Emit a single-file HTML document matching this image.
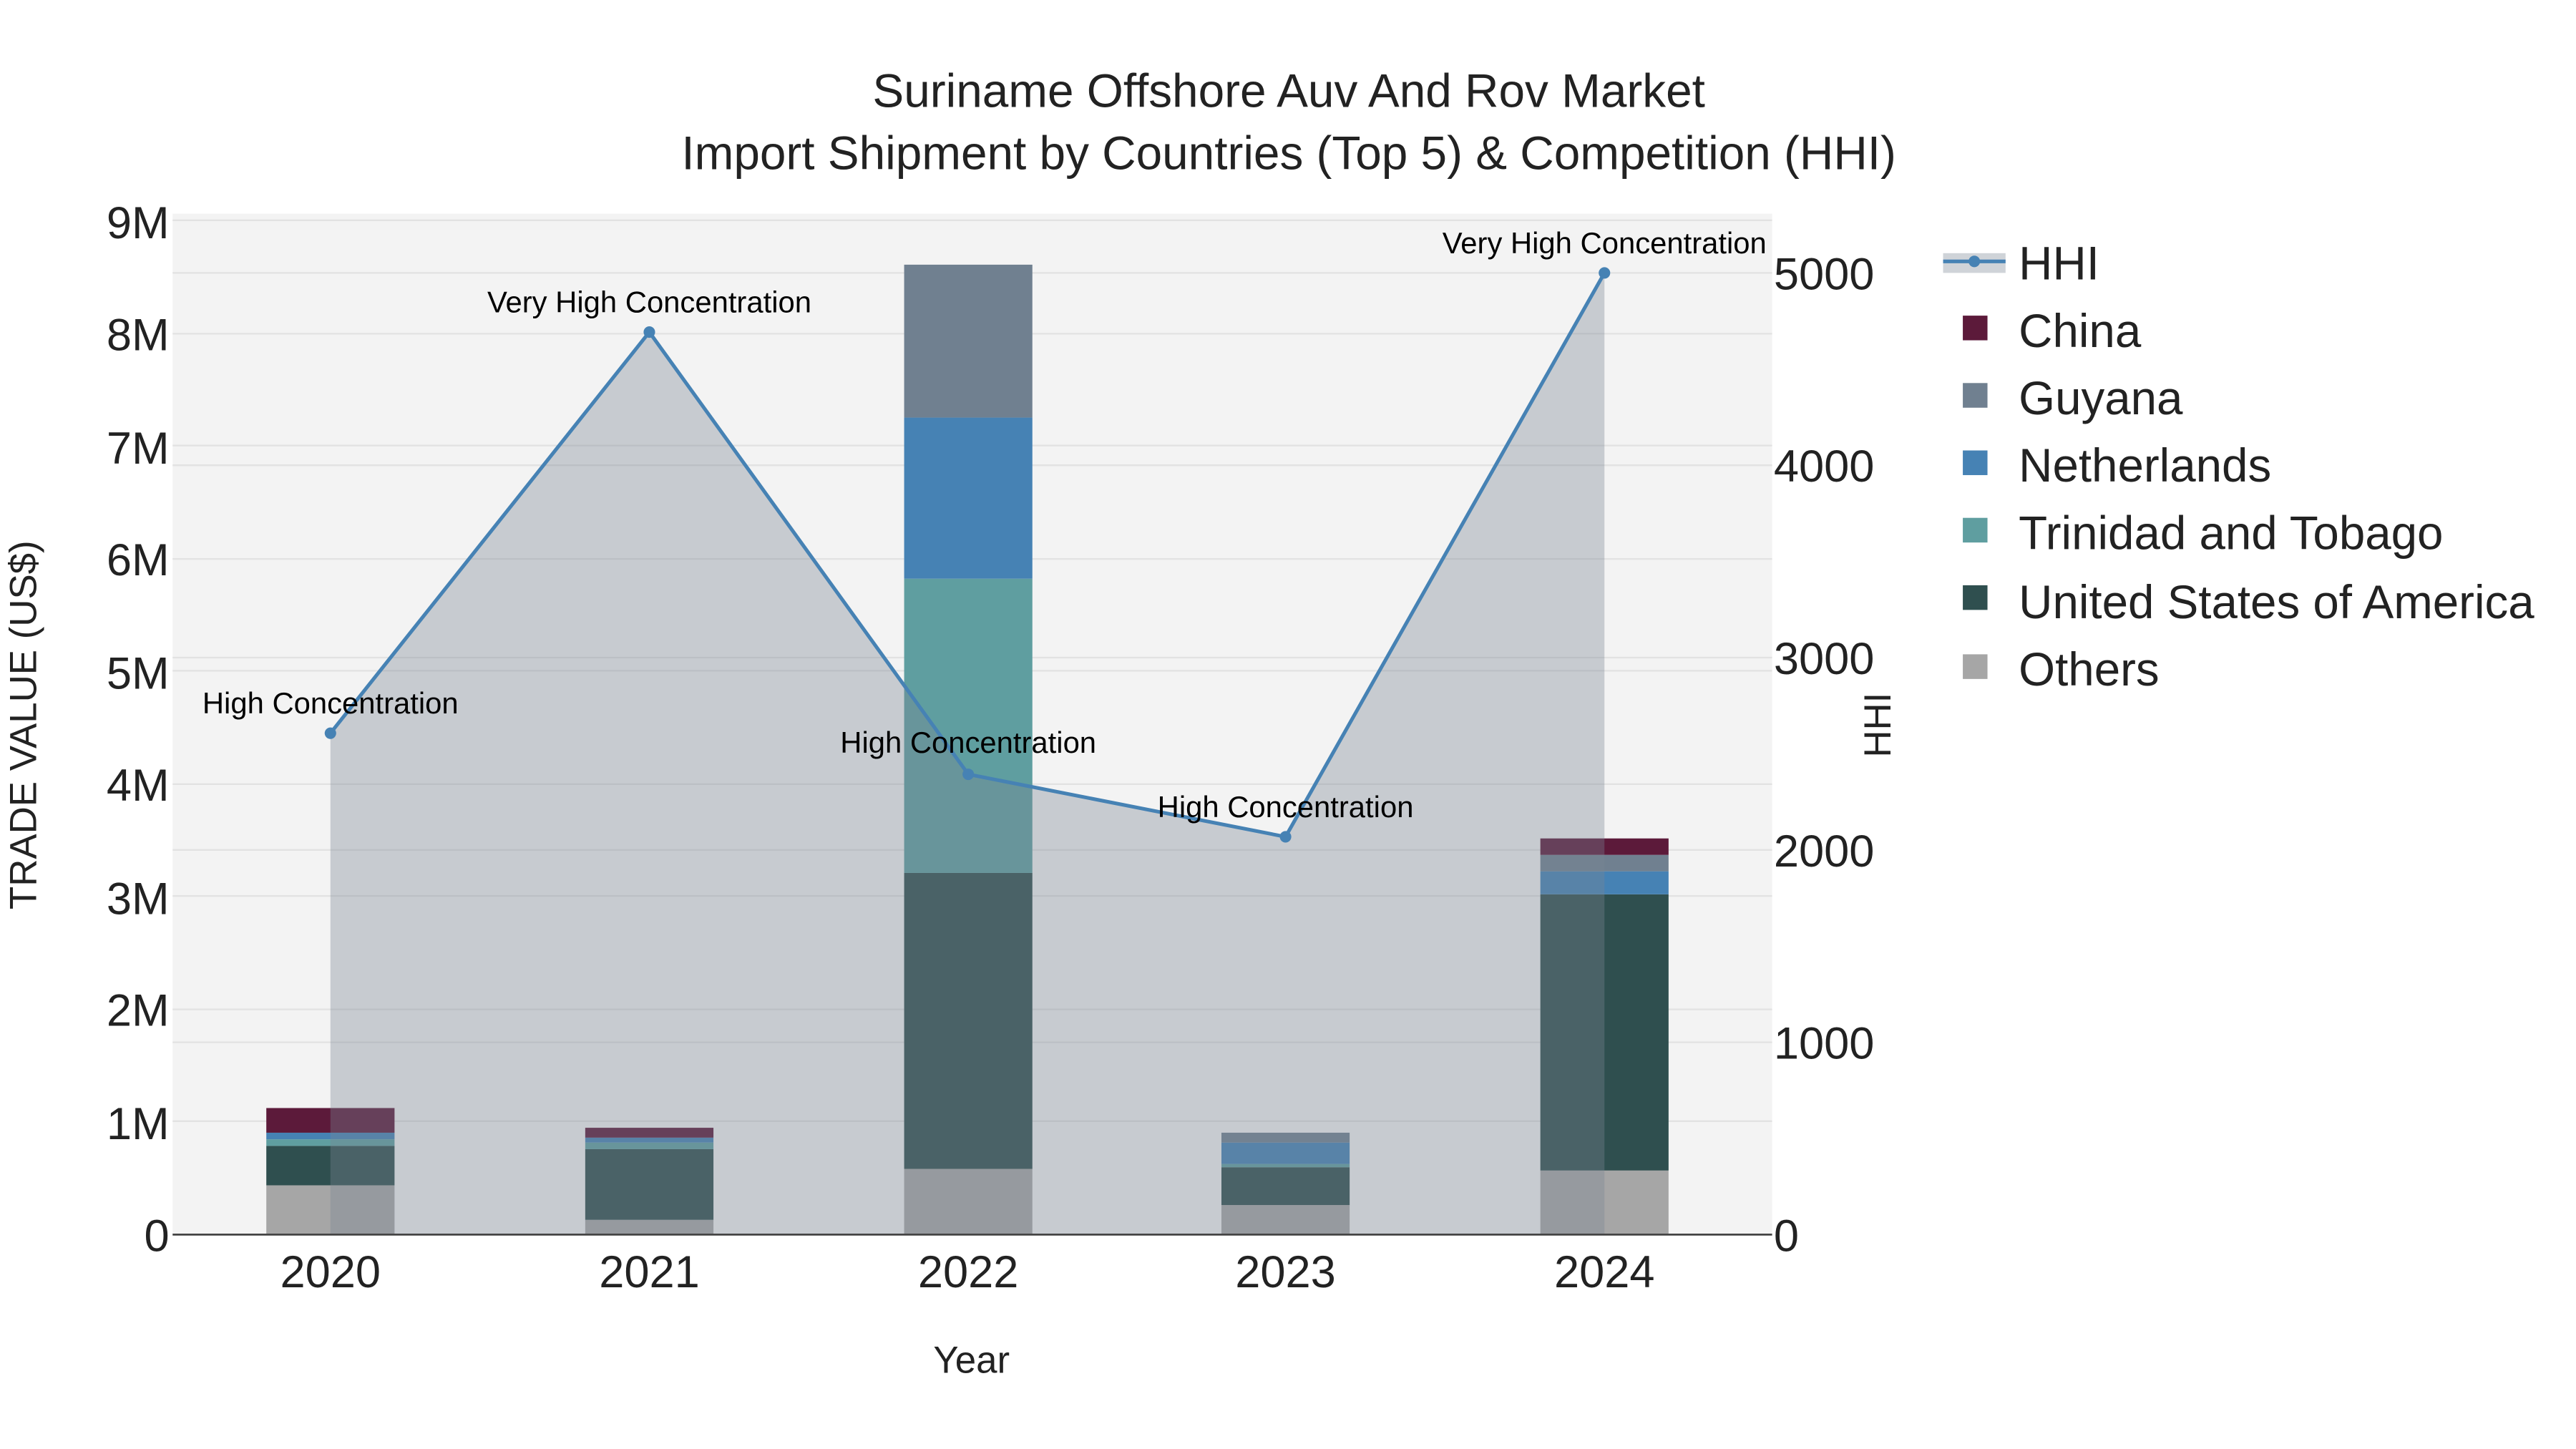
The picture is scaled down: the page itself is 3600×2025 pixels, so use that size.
<!DOCTYPE html>
<html><head><meta charset="utf-8"><style>html,body{margin:0;padding:0;background:#fff}svg{display:block}</style></head>
<body>
<svg width="3600" height="2025" viewBox="0 0 1567 881.4" preserveAspectRatio="none" xmlns="http://www.w3.org/2000/svg" font-family="Liberation Sans, sans-serif">
<rect width="1600" height="900" fill="#fff"/>
<rect x="105" y="130" width="973" height="621" fill="#f3f3f3"/>
<g stroke="#e2e2e2" stroke-width="1">
<line x1="105" x2="1078" y1="134" y2="134"/><line x1="105" x2="1078" y1="203" y2="203"/><line x1="105" x2="1078" y1="271" y2="271"/><line x1="105" x2="1078" y1="340" y2="340"/><line x1="105" x2="1078" y1="408" y2="408"/><line x1="105" x2="1078" y1="477" y2="477"/><line x1="105" x2="1078" y1="545" y2="545"/><line x1="105" x2="1078" y1="614" y2="614"/><line x1="105" x2="1078" y1="682" y2="682"/>
<line x1="105" x2="1078" y1="166" y2="166"/><line x1="105" x2="1078" y1="283" y2="283"/><line x1="105" x2="1078" y1="400" y2="400"/><line x1="105" x2="1078" y1="517" y2="517"/><line x1="105" x2="1078" y1="634" y2="634"/>
</g>
<g>
<rect x="162" y="721" width="78" height="30" fill="#a6a6a6"/><rect x="162" y="697" width="78" height="24" fill="#2f4f4f"/><rect x="162" y="693" width="78" height="4" fill="#5f9ea0"/><rect x="162" y="689" width="78" height="4" fill="#4682b4"/><rect x="162" y="674" width="78" height="15" fill="#5c1a3a"/>
<rect x="356" y="742" width="78" height="9" fill="#a6a6a6"/><rect x="356" y="699" width="78" height="43" fill="#2f4f4f"/><rect x="356" y="695" width="78" height="4" fill="#5f9ea0"/><rect x="356" y="692" width="78" height="3" fill="#4682b4"/><rect x="356" y="686" width="78" height="6" fill="#5c1a3a"/>
<rect x="550" y="711" width="78" height="40" fill="#a6a6a6"/><rect x="550" y="531" width="78" height="180" fill="#2f4f4f"/><rect x="550" y="352" width="78" height="179" fill="#5f9ea0"/><rect x="550" y="254" width="78" height="98" fill="#4682b4"/><rect x="550" y="161" width="78" height="93" fill="#708090"/>
<rect x="743" y="733" width="78" height="18" fill="#a6a6a6"/><rect x="743" y="710" width="78" height="23" fill="#2f4f4f"/><rect x="743" y="708" width="78" height="2" fill="#5f9ea0"/><rect x="743" y="695" width="78" height="13" fill="#4682b4"/><rect x="743" y="689" width="78" height="6" fill="#708090"/>
<rect x="937" y="712" width="78" height="39" fill="#a6a6a6"/><rect x="937" y="544" width="78" height="168" fill="#2f4f4f"/><rect x="937" y="530" width="78" height="14" fill="#4682b4"/><rect x="937" y="520" width="78" height="10" fill="#708090"/><rect x="937" y="510" width="78" height="10" fill="#5c1a3a"/>
</g>
<polygon points="201,751 201,446 395,202 589,471 782,509 976,166 976,751" fill="rgb(122,133,147)" fill-opacity="0.36"/>
<polyline points="201,446 395,202 589,471 782,509 976,166" fill="none" stroke="#4682b4" stroke-width="2.2"/>
<g fill="#4682b4"><circle cx="201" cy="446" r="3.5"/><circle cx="395" cy="202" r="3.5"/><circle cx="589" cy="471" r="3.5"/><circle cx="782" cy="509" r="3.5"/><circle cx="976" cy="166" r="3.5"/></g>
<line x1="105" x2="1078" y1="751" y2="751" stroke="#444" stroke-width="1.2"/>
<g font-size="18.2" fill="#000" text-anchor="middle">
<text x="201" y="434">High Concentration</text><text x="395" y="190">Very High Concentration</text><text x="589" y="458">High Concentration</text><text x="782" y="497">High Concentration</text><text x="976" y="154">Very High Concentration</text>
</g>
<g font-size="27.5" fill="#222" text-anchor="end">
<text x="103" y="761">0</text><text x="103" y="693">1M</text><text x="103" y="624">2M</text><text x="103" y="556">3M</text><text x="103" y="487">4M</text><text x="103" y="419">5M</text><text x="103" y="350">6M</text><text x="103" y="282">7M</text><text x="103" y="213">8M</text><text x="103" y="145">9M</text>
</g>
<g font-size="27.5" fill="#222">
<text x="1079" y="761">0</text><text x="1079" y="644">1000</text><text x="1079" y="527">2000</text><text x="1079" y="410">3000</text><text x="1079" y="293">4000</text><text x="1079" y="176">5000</text>
</g>
<g font-size="27.5" fill="#222" text-anchor="middle">
<text x="201" y="783">2020</text><text x="395" y="783">2021</text><text x="589" y="783">2022</text><text x="782" y="783">2023</text><text x="976" y="783">2024</text>
</g>
<text x="591" y="835" font-size="23" fill="#222" text-anchor="middle">Year</text>
<text transform="translate(22,441) rotate(-90)" font-size="23" fill="#222" text-anchor="middle">TRADE VALUE (US$)</text>
<text transform="translate(1150,441) rotate(-90)" font-size="23" fill="#222" text-anchor="middle">HHI</text>
<g font-size="28.6" fill="#222" text-anchor="middle">
<text x="784" y="65">Suriname Offshore Auv And Rov Market</text>
<text x="784" y="103">Import Shipment by Countries (Top 5) &amp; Competition (HHI)</text>
</g>
<rect x="1182" y="154" width="38" height="12" fill="rgb(122,133,147)" fill-opacity="0.36"/>
<line x1="1182" x2="1220" y1="159" y2="159" stroke="#4682b4" stroke-width="2.2"/><circle cx="1201" cy="159" r="3.5" fill="#4682b4"/>
<rect x="1194" y="192" width="15" height="15" fill="#5c1a3a"/>
<rect x="1194" y="233" width="15" height="15" fill="#708090"/>
<rect x="1194" y="274" width="15" height="15" fill="#4682b4"/>
<rect x="1194" y="315" width="15" height="15" fill="#5f9ea0"/>
<rect x="1194" y="356" width="15" height="15" fill="#2f4f4f"/>
<rect x="1194" y="398" width="15" height="15" fill="#a6a6a6"/>
<g font-size="28.5" fill="#222">
<text x="1228" y="170">HHI</text><text x="1228" y="211">China</text><text x="1228" y="252">Guyana</text><text x="1228" y="293">Netherlands</text><text x="1228" y="334">Trinidad and Tobago</text><text x="1228" y="376">United States of America</text><text x="1228" y="417">Others</text>
</g>
</svg>
</body></html>
